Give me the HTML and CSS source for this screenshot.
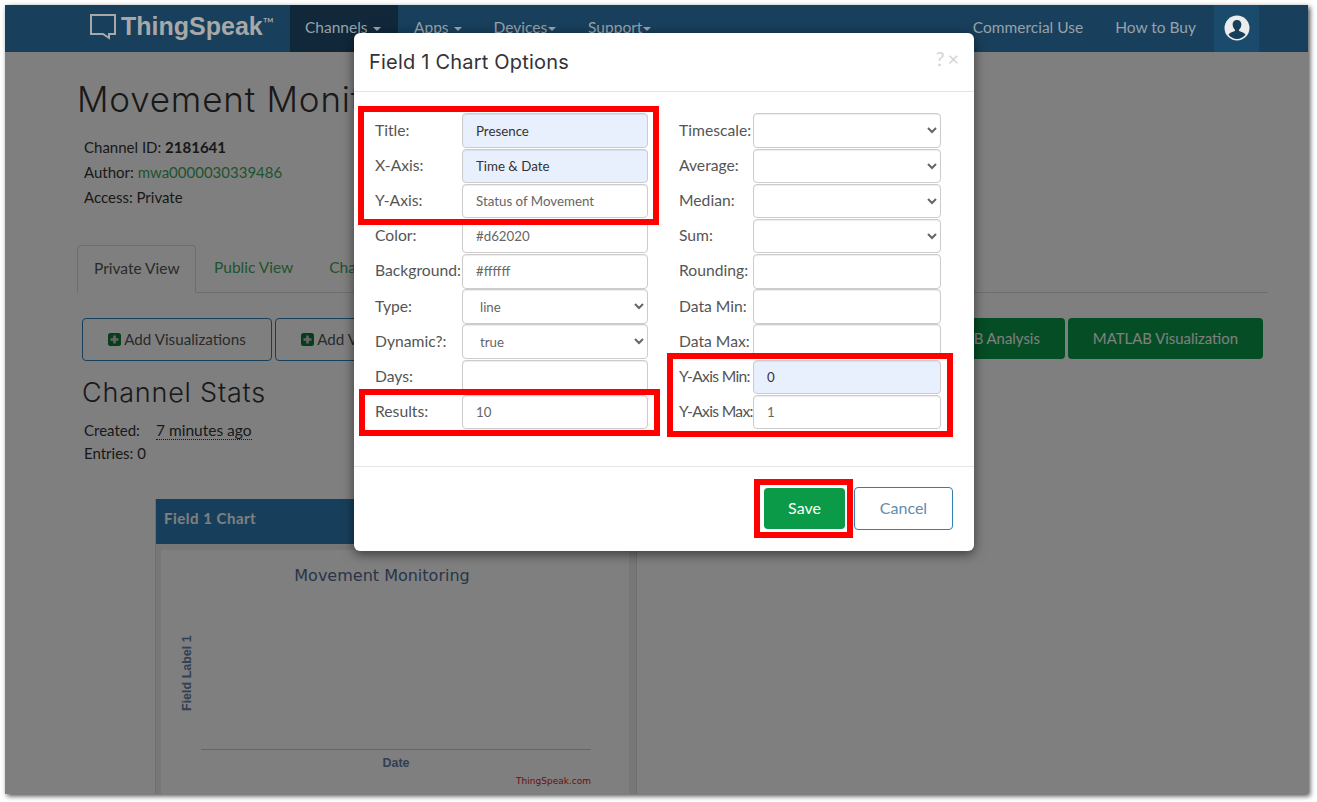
FILE: index.html
```html
<!DOCTYPE html>
<html lang="en">
<head>
  <meta charset="UTF-8">
  <meta name="viewport" content="width=device-width, initial-scale=1.0">
  <title>Field 1 Chart Options</title>
  <link rel="stylesheet" href="styles.css">
</head>
<body>
  <div class="screen">
    <nav class="navbar">
      <a class="brand">
        <svg class="brand-icon" width="27" height="27" viewBox="0 0 27 27" fill="none" stroke="currentColor" stroke-width="2">
          <path d="M1 2H25V21H19V25L13 21H1Z"/>
        </svg>
        <span class="brand-name">ThingSpeak</span><span class="brand-tm">™</span>
      </a>
      <ul class="nav-list">
        <li class="nav-item active">Channels <i class="caret"></i></li>
        <li class="nav-item">Apps <i class="caret"></i></li>
        <li class="nav-item">Devices<i class="caret"></i></li>
        <li class="nav-item">Support<i class="caret"></i></li>
      </ul>
      <ul class="nav-list nav-right">
        <li class="nav-item">Commercial Use</li>
        <li class="nav-item">How to Buy</li>
        <li class="nav-item profile">
          <svg width="26" height="26" viewBox="0 0 26 26">
            <circle cx="13" cy="13" r="12.5" fill="#ececec"/>
            <path d="M13 5c-3 0-4.600 2.300-4.300 5 .2 2 1 3.500 2.200 4.500v1.600c-2.600 1-5.600 1.700-6.400 3.700C6.700 22.500 9.700 24 13 24s6.300-1.500 8.500-4.200c-.8-2-3.800-2.700-6.400-3.700v-1.600c1.200-1 2-2.500 2.200-4.500.3-2.700-1.300-5-4.300-5z" fill="#173f5c"/>
          </svg>
        </li>
      </ul>
    </nav>

    <main class="content">
      <h1 class="channel-name">Movement Monitoring</h1>
      <ul class="channel-meta">
        <li>Channel ID: <strong>2181641</strong></li>
        <li>Author: <a class="link">mwa0000030339486</a></li>
        <li>Access: Private</li>
      </ul>

      <ul class="tabs">
        <li class="tab active">Private View</li>
        <li class="tab">Public View</li>
        <li class="tab">Channel Settings</li>
      </ul>

      <div class="actions">
        <a class="btn btn-line">
          <svg class="plus" width="13" height="13" viewBox="0 0 13 13"><rect width="13" height="13" rx="2.500" fill="#0c7a36"/><path d="M5.200 2.500h2.600v2.700h2.700v2.600H7.800v2.700H5.200V7.800H2.500V5.200h2.700z" fill="#ccc"/></svg>
          Add Visualizations
        </a>
        <a class="btn btn-line">
          <svg class="plus" width="13" height="13" viewBox="0 0 13 13"><rect width="13" height="13" rx="2.500" fill="#0c7a36"/><path d="M5.200 2.500h2.600v2.700h2.700v2.600H7.800v2.700H5.200V7.800H2.500V5.200h2.700z" fill="#ccc"/></svg>
          Add Visualizations
        </a>
        <a class="btn btn-green push">MATLAB Analysis</a>
        <a class="btn btn-green">MATLAB Visualization</a>
      </div>

      <h2 class="stats-title">Channel Stats</h2>
      <p class="stat"><span class="stat-label">Created:</span><abbr class="ago">7 minutes ago</abbr></p>
      <p class="stat">Entries: 0</p>

      <section class="panel">
        <header class="panel-head">Field 1 Chart</header>
        <div class="panel-body">
          <svg class="chart" width="468" height="250" viewBox="0 0 468 250">
            <text class="chart-title" x="221" y="31" text-anchor="middle">Movement Monitoring</text>
            <text class="chart-axis" transform="translate(30 161) rotate(-90)">Field Label 1</text>
            <line x1="40" y1="199.500" x2="430" y2="199.500" stroke="#c0d0e0"/>
            <text class="chart-axis" x="235" y="217" text-anchor="middle">Date</text>
            <text class="chart-credit" x="430" y="234" text-anchor="end">ThingSpeak.com</text>
          </svg>
        </div>
      </section>
    </main>

    <div class="backdrop"></div>

    <div class="modal">
      <header class="modal-head">
        <h3 class="modal-title">Field 1 Chart Options</h3>
        <span class="modal-tools"><span class="help">?</span><span class="close">×</span></span>
      </header>
      <form class="modal-body">
        <div class="col col-left">
          <label class="row">Title:<input class="field filled" value="Presence"></label>
          <label class="row">X-Axis:<input class="field filled" value="Time &amp; Date"></label>
          <label class="row">Y-Axis:<input class="field" value="Status of Movement"></label>
          <label class="row">Color:<input class="field" value="#d62020"></label>
          <label class="row">Background:<input class="field" value="#ffffff"></label>
          <label class="row">Type:<select class="field"><option>line</option></select></label>
          <label class="row">Dynamic?:<select class="field"><option>true</option></select></label>
          <label class="row">Days:<input class="field"></label>
          <label class="row">Results:<input class="field" value="10"></label>
        </div>
        <div class="col col-right">
          <label class="row">Timescale:<select class="field"><option></option></select></label>
          <label class="row">Average:<select class="field"><option></option></select></label>
          <label class="row">Median:<select class="field"><option></option></select></label>
          <label class="row">Sum:<select class="field"><option></option></select></label>
          <label class="row">Rounding:<input class="field"></label>
          <label class="row">Data Min:<input class="field"></label>
          <label class="row">Data Max:<input class="field"></label>
          <label class="row tight">Y-Axis Min:<input class="field filled" value="0"></label>
          <label class="row tight">Y-Axis Max:<input class="field" value="1"></label>
        </div>
      </form>
      <footer class="modal-foot">
        <button class="btn-save" type="button">Save</button>
        <button class="btn-cancel" type="button">Cancel</button>
      </footer>

      <!-- red callouts drawn over the form -->
      <div class="mark mark-axes"></div>
      <div class="mark mark-results"></div>
      <div class="mark mark-range"></div>
      <div class="mark mark-save"></div>
    </div>
  </div>
</body>
</html>
```

FILE: styles.css
```css
* {
  box-sizing: border-box;
}
html, body {
  height: 100%;
  overflow: hidden;
}
body {
  margin: 0;
  padding: 5px 9px 8px 5px;
  background: #fff;
  color: #333;
  font-family: Lato, "Liberation Sans", sans-serif;
  font-size: 15px;
}
ul {
  margin: 0;
  padding: 0;
  list-style-type: none;
}

.screen {
  position: relative;
  height: 789px;
  overflow: hidden;
  background: #fff;
  box-shadow: 2px 2px 5px rgba(0, 0, 0, .7);
}
.backdrop {
  position: absolute;
  inset: 0;
  background: rgba(0, 0, 0, .5);
}

/* navbar sits above the backdrop, so its colours are the dimmed ones */
.navbar {
  position: relative;
  z-index: 1;
  display: flex;
  height: 47px;
  padding-left: 85px;
  background: #183f5c;
  color: #98a2aa;
}
.brand {
  display: flex;
  align-items: center;
  width: 200px;
  padding-bottom: 4px;
  color: #a8a8a8;
}
.brand-icon {
  margin-right: 4px;
}
.brand-name {
  font-family: "Liberation Sans", sans-serif;
  font-weight: 700;
  font-size: 25px;
}
.brand-tm {
  align-self: flex-start;
  margin-top: 9px;
  font-size: 15px;
}
.nav-list {
  display: flex;
}
.nav-right {
  margin-left: auto;
  margin-right: 49px;
}
.nav-item {
  height: 47px;
  padding: 0 16px;
  line-height: 44px;
  font-size: 15.500px;
}
.nav-item.active {
  width: 108px;
  padding: 0 15px;
  background: #10283a;
}
.profile {
  display: flex;
  align-items: center;
  width: 45px;
  margin-left: 2px;
  padding: 0 0 2px 10px;
  background: #1a4a6c;
}
.caret {
  display: inline-block;
  margin-left: 1px;
  vertical-align: middle;
  border-top: 4px solid #98a2aa;
  border-left: 4px solid transparent;
  border-right: 4px solid transparent;
}

/* channel page */
.content {
  padding: 0 40px 0 72px;
}
.channel-name {
  margin: 25px 0 0;
  font-family: Inter, sans-serif;
  font-weight: 300;
  font-size: 35px;
  letter-spacing: .8px;
  line-height: 44px;
  white-space: nowrap;
}
.channel-meta {
  margin: 14px 0 0 7px;
  line-height: 25px;
}
.link {
  color: #3da85c;
}
.tabs {
  display: flex;
  height: 48px;
  margin-top: 35px;
  border-bottom: 1px solid #ddd;
}
.tab {
  padding: 13px 18px 0;
  color: #3da85c;
  font-size: 15.500px;
  white-space: nowrap;
}
.tab.active {
  width: 119px;
  height: 48px;
  padding: 13px 16px 0;
  border: 1px solid #ddd;
  border-bottom-color: #fff;
  border-radius: 4px 4px 0 0;
  color: #555;
}
.actions {
  display: flex;
  gap: 3px;
  height: 43px;
  margin: 25px 5px 0 5px;
}
.btn {
  display: flex;
  align-items: center;
  justify-content: center;
  padding-bottom: 1px;
  font-family: Lato, sans-serif;
  font-size: 15.200px;
  border-radius: 4px;
}
.btn-line {
  gap: 3px;
  width: 190px;
  border: 1px solid #2f7fb8;
  color: #555;
}
.btn-green {
  height: 41px;
  padding: 0 25px 1px;
  background: #0a9a48;
  color: #fff;
  font-size: 14.900px;
}
.push {
  margin-left: auto;
}
.stats-title {
  margin: 15px 0 0 5px;
  font-family: Inter, sans-serif;
  font-weight: 300;
  font-size: 27px;
  letter-spacing: .8px;
  line-height: 34px;
}
.stat {
  margin: 0 0 0 7px;
  line-height: 23px;
}
.stat:first-of-type {
  margin-top: 9px;
}
.stat-label {
  display: inline-block;
  width: 72px;
}
.ago {
  border-bottom: 1px dotted #333;
  font-size: 15.500px;
}

/* chart panel */
.panel {
  width: 482px;
  margin: 34px 0 0 78px;
  background: #eee;
  border-left: 1px solid #ddd;
  border-right: 1px solid #ddd;
}
.panel-head {
  height: 45px;
  padding: 10px 8px;
  background: #2f7fb8;
  color: #fff;
  font-size: 15px;
  font-weight: 700;
  letter-spacing: .5px;
}
.panel-body {
  margin: 6px 7px 0 5px;
  background: #fff;
}
.chart {
  display: block;
}
.chart-title {
  font-family: "DejaVu Sans", sans-serif;
  font-size: 16px;
  fill: #506c90;
}
.chart-axis {
  font-family: "Liberation Sans", sans-serif;
  font-size: 12.500px;
  font-weight: 700;
  fill: #6480a8;
}
.chart-credit {
  font-family: "DejaVu Sans", sans-serif;
  font-size: 9px;
  fill: #d62020;
}

/* options dialog */
.modal {
  position: absolute;
  z-index: 2;
  left: 349px;
  top: 28px;
  width: 620px;
  height: 518px;
  background: #fff;
  border-radius: 6px;
  box-shadow: 0 3px 12px rgba(0, 0, 0, .55);
}
.modal-head {
  display: flex;
  align-items: flex-start;
  justify-content: space-between;
  height: 59px;
  padding: 16px 15px 0;
  border-bottom: 1px solid #e5e5e5;
}
.modal-title {
  margin: 0;
  font-family: Inter, sans-serif;
  font-weight: 400;
  font-size: 20px;
  letter-spacing: .2px;
  line-height: 26px;
  color: #333;
}
.modal-tools {
  display: flex;
  align-items: center;
  gap: 3px;
  height: 18px;
  color: #d4d4d4;
}
.help,
.close {
  font-size: 20px;
}
.modal-body {
  display: flex;
  gap: 31px;
  height: 375px;
  padding: 21px 0 0 21px;
  border-bottom: 1px solid #e5e5e5;
}
.col-left {
  width: 273px;
}
.col-right {
  width: 262px;
}
.row {
  display: flex;
  align-items: center;
  justify-content: space-between;
  height: 35.200px;
  padding-bottom: 2px;
  color: #555;
  font-size: 15.700px;
  white-space: nowrap;
}
.row.tight {
  letter-spacing: -.7px;
}
.field {
  flex-shrink: 0;
  height: 34.500px;
  margin-top: 2px;
  padding: 0 13px;
  background: #fff;
  border: 1px solid #ccc;
  border-radius: 4px;
  box-shadow: inset 0 1px 1px rgba(0, 0, 0, .075);
  color: #666;
  font-family: Lato, sans-serif;
  font-size: 13.300px;
  letter-spacing: 0;
  outline: none;
}
.col-left .field {
  width: 186px;
}
.col-right .field {
  width: 188px;
}
.field.filled {
  background: #e8f0fe;
  color: #333;
}
.modal-foot {
  display: flex;
  gap: 9px;
  justify-content: flex-end;
  align-items: center;
  height: 84px;
  padding: 0 21px 2px 0;
}
.btn-save,
.btn-cancel {
  padding: 0 0 2px;
  border-radius: 4px;
  font-family: Lato, sans-serif;
  font-size: 16px;
}
.btn-save {
  width: 81px;
  height: 41px;
  background: #0a9a48;
  border: 0;
  color: #fff;
}
.btn-cancel {
  width: 99px;
  height: 43px;
  background: #fff;
  border: 1px solid #2f7fb8;
  color: #5f8cae;
}

/* callouts */
.mark {
  position: absolute;
  border: 6px solid #f00;
}
.mark-axes {
  left: 4px;
  top: 73px;
  width: 301px;
  height: 119px;
}
.mark-results {
  left: 5px;
  top: 356px;
  width: 301px;
  height: 47px;
}
.mark-range {
  left: 313px;
  top: 320px;
  width: 286px;
  height: 84px;
}
.mark-save {
  left: 400px;
  top: 446px;
  width: 99px;
  height: 59px;
}
```
